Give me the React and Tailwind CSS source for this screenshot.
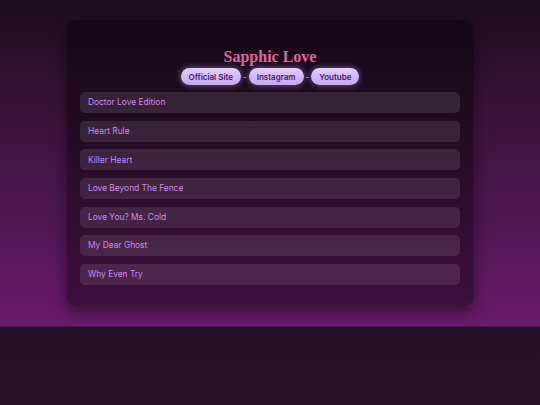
const songs = [
  "Doctor Love Edition",
  "Heart Rule",
  "Killer Heart",
  "Love Beyond The Fence",
  "Love You? Ms. Cold",
  "My Dear Ghost",
  "Why Even Try",
];

const links = ["Official Site", "Instagram", "Youtube"];

export default function App() {
  return (
    <div className="min-h-screen bg-gradient-to-b from-[#1d0b1f] to-[#281129]" style={{ fontFamily: "Inter, 'Noto Sans', sans-serif" }}>
      <div className="bg-gradient-to-b from-[#1f0d1f] to-[#6a1a6c] pt-5 pb-[20px] border-b border-[#4a1450]">
        {/* card */}
        <div className="mx-auto w-[406px] rounded-lg bg-black/40 shadow-[0_6px_16px_rgba(0,0,0,0.45)] px-[13px] pt-[28px] pb-[21px]">
          <h1
            className="text-center text-[16px] leading-[18px] font-bold text-[#e4639e]"
            style={{ fontFamily: "'Liberation Serif', 'DejaVu Serif', serif" }}
          >
            Sapphic Love
          </h1>
          <div className="flex items-center justify-center gap-[2px] mt-[2px]">
            {links.map((l, i) => (
              <div key={l} className="flex items-center gap-[2px]">
                {i > 0 && <span className="text-[8px] text-[#c9a8f0]">-</span>}
                <span className="rounded-full bg-gradient-to-b from-[#e2cffc] to-[#c6a6f0] px-[8px] h-[17px] flex items-center text-[8px] font-semibold text-[#43206a] shadow-[0_0_6px_rgba(200,150,255,0.6)]">
                  {l}
                </span>
              </div>
            ))}
          </div>
          <div className="mt-[7px] flex flex-col gap-[7.67px]">
            {songs.map((s) => (
              <div key={s} className="h-[21px] rounded-[5px] bg-white/10 flex items-center px-[8px] text-[8.4px] text-[#c88ae8]">
                {s}
              </div>
            ))}
          </div>
        </div>
      </div>
    </div>
  );
}
